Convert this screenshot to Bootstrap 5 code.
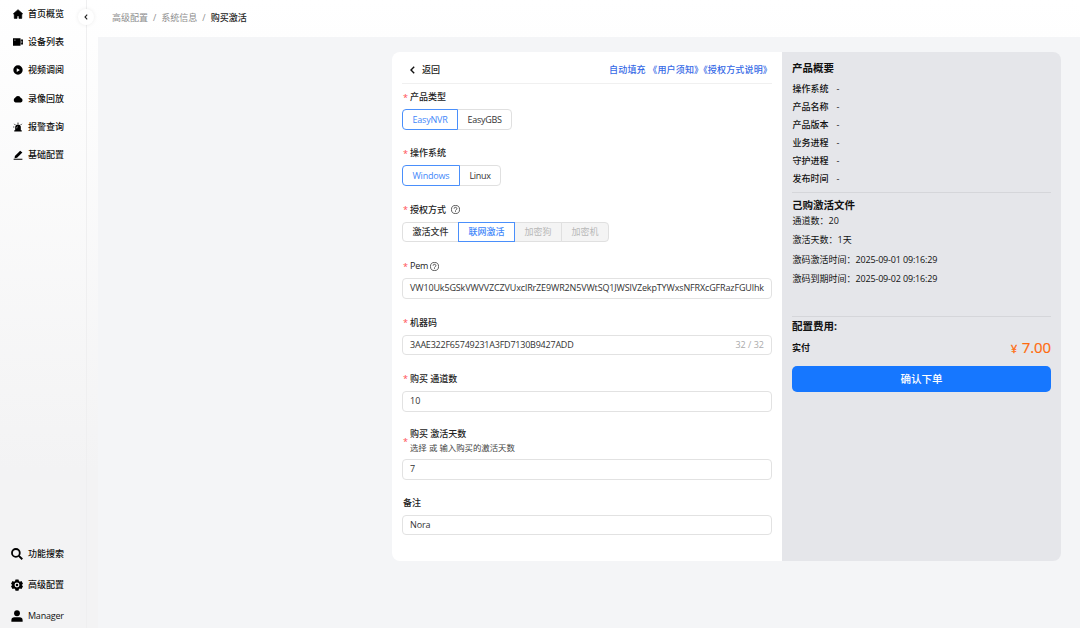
<!DOCTYPE html>
<html lang="zh-CN">
<head>
<meta charset="utf-8">
<meta name="viewport" content="width=device-width, initial-scale=1">
<title>购买激活</title>
<link href="https://cdn.jsdelivr.net/npm/bootstrap@5.3.0/dist/css/bootstrap.min.css" rel="stylesheet">
<style>
body{font-family:"Open Sans","Noto Sans CJK SC",sans-serif;font-size:9px;line-height:14px;color:#222;height:628px;overflow:hidden;background:linear-gradient(#fff,#f3f3f4 75%)}
.side{width:87px;border-right:1px solid #efeff0;padding:0 0 0 11px}
.side a{color:#111;text-decoration:none;display:flex;align-items:center;height:28.2px;gap:4px;font-weight:500}
.side .foot{margin-bottom:-3.5px}
.side .foot a{height:31px}
.side svg{width:12px;height:12px;margin-right:1px;fill:#000;flex:none}
.side .main-links svg{width:10px;height:10px;margin:0 1.5px}
.fold{left:78px;top:9px;width:16px;height:16px;background:#fff;box-shadow:0 0 4px rgba(0,0,0,.08)}
.crumbs{height:37px;padding:0 0 2px 25px;color:#8d8d8d;gap:5px}
.crumbs b{color:#222;font-weight:500}
.work{background:#f4f5f7;margin-left:10.5px;padding:15px 19px 0 0}
.sheet{width:669px;height:509px}
.form-side{width:390px;background:#fff;border-radius:8px 0 0 8px;padding:0 10px}
.sum-side{width:279px;background:#e5e6ea;border-radius:0 8px 8px 0;padding:8px 10px 0;color:#111}
.top{height:32px;border-bottom:1px solid #f0f0f0;padding:5px 0 0 7px;margin-bottom:3px;font-weight:500}
.top .links{color:#3569e6;letter-spacing:.16px}
.top .back{gap:6px}
.fi{margin-bottom:13.7px}
.fi .cap{height:22px;padding:0 0 2px 1px;font-weight:500;gap:4px}
.fi .cap i{color:#ff4d4f;font-style:normal;width:3px;font-weight:400;padding-top:1px}
.fi .cap.tall{height:34px;line-height:14px}
.fi .cap small{font-size:8.4px;font-weight:400;color:#444;display:block}
.fi .form-control{height:20.7px;min-height:0;padding:0 7px;border:1px solid #e2e2e2;border-radius:4px;font-size:9px;line-height:18px;color:#333;background:#fff;white-space:nowrap}
.fi:last-child{margin-top:-15px;padding-top:14px}
.pem-text{letter-spacing:-.14px}
.code-text{letter-spacing:-.22px}
.seg{height:20.7px}
.seg .btn{font-size:9px;line-height:19px;padding:0 9.5px;border:1px solid #e0e0e0;border-radius:4px;color:#333;text-align:center}
.seg .btn.md,.seg .btn.off{line-height:18px}
.seg .btn.on{border-color:#4a8ffb;color:#3f87fa;z-index:2}
.seg .btn.off{background:#f4f4f4;color:#b8b8b8}
.seg .lat{letter-spacing:-.2px;padding:0 9.5px}
.seg .lat.tight{letter-spacing:-.3px}
.md{font-weight:500!important}
.h-sum{font-size:10.5px;line-height:16px;font-weight:700}
.rows{padding:4px 0 0 .5px}
.rows div{height:18px;line-height:18px;display:flex;gap:8px}
.bought{height:105px;margin-top:-2px;padding-left:.5px}
.bought div{height:19.3px;line-height:19.3px;white-space:pre}
.bought .stamp{letter-spacing:-.17px}
.rule{border-top:1px solid #d5d6da}
.pay{height:31.5px;padding-bottom:3.5px}
.price{color:#ff6b0f;font-size:15px;line-height:20px;-webkit-text-stroke:.2px #ff6b0f;letter-spacing:-.1px}
.price span{font-size:10.5px;margin-right:1px;-webkit-text-stroke:.4px #ff6b0f}
.go{height:26px;background:#1677ff;color:#fff;border:0;border-radius:5px;font-size:10.5px;line-height:26px;padding:0;font-weight:500}
.q{width:9px;height:9px;fill:none;stroke:#333;margin-left:1px}
.q.near{margin-left:-2px}
.count{color:#aaa}
</style>
</head>
<body>
<div class="d-flex h-100 position-relative">
  <nav class="side d-flex flex-column justify-content-between flex-shrink-0">
    <div class="main-links">
      <a href="#"><svg viewBox="0 0 16 16"><path d="M8 1 0.5 7.5 2 9v6h4.500v-4h3v4H14V9l1.500-1.500z" stroke="#000" stroke-linejoin="round"/></svg>首页概览</a>
      <a href="#"><svg viewBox="0 0 16 16"><path d="M0 2h12v12H0zM12.500 4H16v8h-3.500z"/><path d="M2 5h2M14 6v4" stroke="#fff"/></svg>设备列表</a>
      <a href="#"><svg viewBox="0 0 16 16"><path fill-rule="evenodd" d="M8 .5a7.500 7.500 0 1 0 0 15 7.500 7.500 0 0 0 0-15zM6 5l5 3-5 3z"/></svg>视频调阅</a>
      <a href="#"><svg viewBox="0 0 16 16"><path d="M4 13.500a4 4 0 0 1-.6-7.400A5 5 0 0 1 12.500 6.500 3.600 3.600 0 0 1 12.500 13.500z"/></svg>录像回放</a>
      <a href="#"><svg viewBox="0 0 16 16"><path d="M3.500 13V8.500a4.500 4.500 0 0 1 9 0V13H14v2H2v-2z"/><path d="M8 1v2M2 3l1.500 1.500M14 3l-1.500 1.500M.5 8H2" stroke="#000" stroke-width="1.500"/><path d="M6 10V8.800L7.500 7.500" stroke="#fff" fill="none"/></svg>报警查询</a>
      <a href="#"><svg viewBox="0 0 16 16"><path d="M3 9.500 11.500 1 15 4 6.500 12.500 2.500 13zM1 14h14v1.600H1z"/></svg>基础配置</a>
    </div>
    <div class="foot">
      <a href="#"><svg viewBox="0 0 16 16"><path d="M10.500 10.500 15 15" stroke="#000" stroke-width="2.600"/><circle cx="6.500" cy="6.500" r="5.200" fill="none" stroke="#000" stroke-width="2.400"/></svg>功能搜索</a>
      <a href="#"><svg viewBox="0 0 16 16"><path fill-rule="evenodd" d="M6 .5h4l.6 2.300 1.200.7 2.200-.7 2 3.400L14.300 8l1.700 1.800-2 3.400-2.200-.7-1.200.7-.6 2.300H6l-.6-2.300-1.200-.7-2.200.7L0 9.800 1.700 8 0 6.200l2-3.400 2.200.7 1.200-.7zM8 4.700a3.300 3.300 0 1 0 0 6.600 3.300 3.300 0 0 0 0-6.600z"/><circle cx="8" cy="8" r="1.700"/></svg>高级配置</a>
      <a href="#" class="fw-normal"><svg viewBox="0 0 16 16"><circle cx="8" cy="4.300" r="3.900"/><path d="M.5 15.500v-2a4 4 0 0 1 4-3.800h7a4 4 0 0 1 4 3.800v2z"/></svg><span class="code-text">Manager</span></a>
    </div>
  </nav>
  <button class="fold position-absolute border-0 rounded-circle p-0 d-flex align-items-center justify-content-center" aria-label="收起"><svg width="6" height="8" viewBox="0 0 6 8"><path d="M4.200 1.700 2 4l2.200 2.300" fill="none" stroke="#222" stroke-width="1.100"/></svg></button>
  <main class="flex-grow-1 d-flex flex-column">
    <div class="crumbs d-flex align-items-center"><span>高级配置</span><span>/</span><span>系统信息</span><span>/</span><b>购买激活</b></div>
    <div class="work flex-grow-1">
      <div class="sheet d-flex ms-auto">
        <section class="form-side">
          <div class="top d-flex align-items-center justify-content-between">
            <span class="back d-flex align-items-center"><svg width="7" height="8" viewBox="0 0 7 8"><path d="M5.200.8 2 4l3.200 3.200" fill="none" stroke="#111" stroke-width="1.400"/></svg><span>返回</span></span>
            <span class="links">自动填充 《用户须知》《授权方式说明》</span>
          </div>
          <div class="fi"><div class="cap d-flex align-items-center"><i>*</i>产品类型</div>
            <div class="seg btn-group"><button class="btn on lat">EasyNVR</button><button class="btn lat tight">EasyGBS</button></div></div>
          <div class="fi"><div class="cap d-flex align-items-center"><i>*</i>操作系统</div>
            <div class="seg btn-group"><button class="btn on lat">Windows</button><button class="btn lat tight">Linux</button></div></div>
          <div class="fi"><div class="cap d-flex align-items-center"><i>*</i>授权方式<svg class="q" viewBox="0 0 16 16"><circle cx="8" cy="8" r="7.200" stroke-width="1.400"/><path d="M5.500 6.500a2.500 2.300 0 1 1 3.500 2q-1 .5-1 1.500M8 11v1.500" stroke-width="1.400"/></svg></div>
            <div class="seg btn-group"><button class="btn md">激活文件</button><button class="btn on md">联网激活</button><button class="btn off">加密狗</button><button class="btn off">加密机</button></div></div>
          <div class="fi"><div class="cap d-flex align-items-center fw-normal"><i>*</i><span class="code-text">Pem</span><svg class="q near" viewBox="0 0 16 16"><circle cx="8" cy="8" r="7.200" stroke-width="1.400"/><path d="M5.500 6.500a2.500 2.300 0 1 1 3.500 2q-1 .5-1 1.500M8 11v1.500" stroke-width="1.400"/></svg></div>
            <div class="form-control"><span class="pem-text">VW10Uk5GSkVWVVZCZVUxclRrZE9WR2N5VWtSQ1JWSlVZekpTYWxsNFRXcGFRazFGUlhk</span></div></div>
          <div class="fi"><div class="cap d-flex align-items-center"><i>*</i>机器码</div>
            <div class="form-control d-flex justify-content-between"><span class="code-text">3AAE322F65749231A3FD7130B9427ADD</span><span class="count">32 / 32</span></div></div>
          <div class="fi"><div class="cap d-flex align-items-center"><i>*</i>购买 通道数</div><div class="form-control">10</div></div>
          <div class="fi"><div class="cap tall d-flex align-items-center"><i>*</i><span>购买 激活天数<small>选择 或 输入购买的激活天数</small></span></div><div class="form-control">7</div></div>
          <div class="fi"><div class="cap d-flex align-items-center">备注</div><div class="form-control"><span class="pem-text">Nora</span></div></div>
        </section>
        <aside class="sum-side">
          <div class="h-sum">产品概要</div>
          <div class="rows mb-1"><div><span class="md">操作系统</span><span>-</span></div><div><span class="md">产品名称</span><span>-</span></div><div><span class="md">产品版本</span><span>-</span></div><div><span class="md">业务进程</span><span>-</span></div><div><span class="md">守护进程</span><span>-</span></div><div><span class="md">发布时间</span><span>-</span></div></div>
          <div class="rule h-sum pt-1">己购激活文件</div>
          <div class="bought"><div>通道数：20</div><div>激活天数：1天</div><div>激码激活时间：<span class="stamp">2025-09-01 09:16:29</span></div><div>激码到期时间：<span class="stamp">2025-09-02 09:16:29</span></div></div>
          <div class="rule h-sum" style="padding-top:1px">配置费用:</div>
          <div class="pay d-flex justify-content-between align-items-center"><b>实付</b><span class="price"><span>¥</span> 7.00</span></div>
          <button class="btn go w-100 d-block">确认下单</button>
        </aside>
      </div>
    </div>
  </main>
</div>
<script src="https://cdn.jsdelivr.net/npm/bootstrap@5.3.0/dist/js/bootstrap.bundle.min.js"></script>
</body>
</html>
